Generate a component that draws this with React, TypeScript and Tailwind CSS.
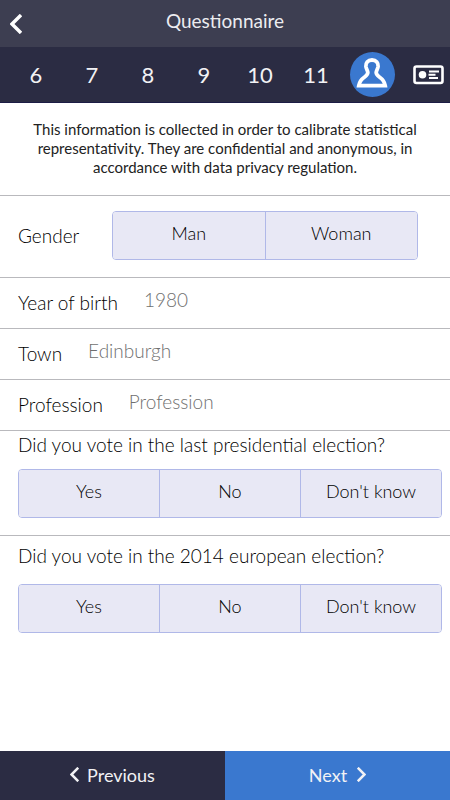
import { useState } from "react";

const steps = ["6", "7", "8", "9", "10", "11"];

const questions = [
    { id: "presidential", title: "Did you vote in the last presidential election?", spacing: "h-[105px]", gap: "mt-2.5" },
    { id: "european", title: "Did you vote in the 2014 european election?", spacing: "pt-1.5", gap: "mt-3.5" },
];

const fields = [
    { id: "birth", label: "Year of birth", placeholder: "1980" },
    { id: "town", label: "Town", placeholder: "Edinburgh" },
    { id: "profession", label: "Profession", placeholder: "Profession" },
];

function Chevron({ className, right = false }: { className: string; right?: boolean }) {
    return (
        <svg viewBox="0 0 12 20" className={className} fill="none" stroke="currentColor" strokeWidth="3.4">
            <path d={right ? "M1 1l9 9-9 9" : "M11 1l-9 9 9 9"} />
        </svg>
    );
}

function PersonIcon() {
    return (
        <svg viewBox="0 0 32 30" className="w-8 h-[30px]" fill="none" stroke="white" strokeWidth="3.8" strokeLinejoin="miter">
            <path d="M16 2C11.6 2 9.6 5 9.9 8.4C10.2 11 11.8 12.6 11.8 14.6C11.8 19.6 4.4 18.4 2.8 27.6H29.2C27.6 18.4 20.2 19.6 20.2 14.6C20.2 12.6 21.8 11 22.1 8.4C22.4 5 20.4 2 16 2Z" />
        </svg>
    );
}

function CardIcon() {
    return (
        <svg viewBox="0 0 31 20" className="w-[31px] h-5" fill="none" stroke="white">
            <rect x="1.5" y="1.5" width="28" height="16.5" rx="2" strokeWidth="2.6" />
            <circle cx="9.5" cy="9.8" r="3.8" fill="white" stroke="none" />
            <path d="M16 6.5h10M15.5 9.8h7M16 13h9" strokeWidth="2" />
        </svg>
    );
}

function Choices({ name, options }: { name: string; options: string[] }) {
    const [selected, setSelected] = useState<string | null>(null);

    return (
        <div role="group" aria-label={name} className="flex h-[49px] w-full rounded border border-[#b0b8e8] overflow-hidden divide-x divide-[#b0b8e8] text-lg">
            {options.map((option) => (
                <button
                    key={option}
                    type="button"
                    aria-pressed={selected === option}
                    onClick={() => setSelected(option)}
                    className={`flex-1 pb-1.5 ${selected === option ? "bg-[#c9cdf0]" : "bg-[#e8e8f5]"}`}
                >
                    {option}
                </button>
            ))}
        </div>
    );
}

export default function App() {
    return (
        <div className="min-h-screen flex flex-col bg-white text-black text-lg leading-7 font-[Lato,sans-serif]">
            <header className="relative h-[47px] bg-[#3d3e51] text-[#ececf0] flex justify-center pt-[7px]">
                <button type="button" aria-label="Back" className="absolute left-2.5 top-3.5 text-white">
                    <Chevron className="w-3 h-5" />
                </button>
                <h1 className="text-[19px]">Questionnaire</h1>
            </header>

            {/* Step bar, runs past the right edge */}
            <nav className="h-14 bg-[#2b2c43] border-b border-[#1c1c45] text-[#f2f2f5] text-[22px] flex items-center pl-2 overflow-hidden">
                {steps.map((step) => (
                    <button key={step} type="button" className="w-14 shrink-0">{step}</button>
                ))}
                <button type="button" aria-label="Profile" aria-current="step" className="w-14 shrink-0 flex justify-center">
                    <span className="size-[45px] rounded-full bg-[#3a78cf] flex items-center justify-center pb-1">
                        <PersonIcon />
                    </span>
                </button>
                <button type="button" aria-label="Card" className="w-14 shrink-0 flex justify-center">
                    <CardIcon />
                </button>
            </nav>

            <main className="font-light">
                <p className="h-[93px] px-6 pt-[17px] text-center text-[15px] leading-[19px] font-normal text-[#222222] border-b border-[#b9b9bd]">
                    This information is collected in order to calibrate statistical representativity. They are confidential and anonymous, in accordance with data privacy regulation.
                </p>

                <div className="h-[82px] pl-[18px] pr-8 pb-0.5 flex items-center border-b border-[#b9b9bd]">
                    <span className="w-[94px] shrink-0 text-[19px]">Gender</span>
                    <Choices name="Gender" options={["Man", "Woman"]} />
                </div>

                {fields.map((field) => (
                    <div key={field.id} className="h-[51px] px-[18px] flex items-center gap-[26px] text-[19px] border-b border-[#b9b9bd]">
                        <label htmlFor={field.id} className="shrink-0">{field.label}</label>
                        <input id={field.id} placeholder={field.placeholder} className="flex-1 min-w-0 pb-1.5 outline-none placeholder:text-[#6f6f6f]" />
                    </div>
                ))}

                {questions.map((question) => (
                    <section key={question.id} className={`pl-[18px] pr-2 border-b border-[#b9b9bd] last:border-b-0 ${question.spacing}`}>
                        <h2 className="text-[19px] font-light">{question.title}</h2>
                        <div className={question.gap}>
                            <Choices name={question.title} options={["Yes", "No", "Don't know"]} />
                        </div>
                    </section>
                ))}
            </main>

            <footer className="mt-auto h-[49px] grid grid-cols-2 text-[#f2f2f5]">
                <button type="button" className="bg-[#2b2c43] pb-0.5 flex items-center justify-center gap-2">
                    <Chevron className="w-[9px] h-[15px]" />
                    Previous
                </button>
                <button type="button" className="bg-[#3a78cf] pb-0.5 flex items-center justify-center gap-2.5">
                    Next
                    <Chevron className="w-[9px] h-[15px]" right />
                </button>
            </footer>
        </div>
    );
}
